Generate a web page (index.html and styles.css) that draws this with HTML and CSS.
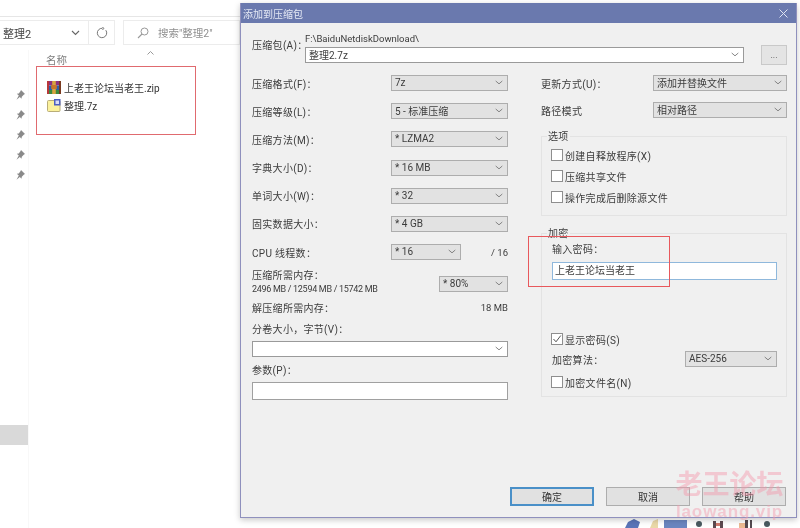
FILE: index.html
```html
<!DOCTYPE html>
<html lang="zh-CN">
<head>
<meta charset="utf-8">
<title>添加到压缩包</title>
<link rel="stylesheet" href="styles.css">
</head>
<body>
<div class="desktop">
  <section class="explorer">
    <div class="toolbar">
      <div class="address">
        <span class="address-text">整理2</span>
        <svg class="address-chevron" width="9" height="6" viewBox="0 0 9 6"><path d="M1 1l3.500 3.500L8 1" fill="none" stroke="#666" stroke-width="1.100"/></svg>
      </div>
      <div class="refresh">
        <svg width="12" height="12" viewBox="0 0 12 12"><path d="M9.800 3.200A4.700 4.700 0 1 1 6.400 1.300M6.200 0l1.800 1.400L6.400 3" fill="none" stroke="#777" stroke-width="1"/></svg>
      </div>
      <div class="search">
        <svg width="12" height="12" viewBox="0 0 12 12"><circle cx="7.500" cy="4.500" r="3.500" fill="none" stroke="#999"/><path d="M5 7l-4 4" stroke="#999" stroke-width="1.100"/></svg>
        <span>搜索"整理2"</span>
      </div>
    </div>
    <div class="content">
      <nav class="quick">
        <svg class="pin" viewBox="0 0 10 10"><path d="M6 0l4 4-1 .6-2.200 2.200-.3 2L4.800 7 1.500 9.800 3.800 5.600 1.800 3.800l2-.4L5.600 1z" fill="#8a8a8a"/></svg>
        <svg class="pin" viewBox="0 0 10 10"><path d="M6 0l4 4-1 .6-2.200 2.200-.3 2L4.800 7 1.500 9.800 3.800 5.600 1.800 3.800l2-.4L5.600 1z" fill="#8a8a8a"/></svg>
        <svg class="pin" viewBox="0 0 10 10"><path d="M6 0l4 4-1 .6-2.200 2.200-.3 2L4.800 7 1.500 9.800 3.800 5.600 1.800 3.800l2-.4L5.600 1z" fill="#8a8a8a"/></svg>
        <svg class="pin" viewBox="0 0 10 10"><path d="M6 0l4 4-1 .6-2.200 2.200-.3 2L4.800 7 1.500 9.800 3.800 5.600 1.800 3.800l2-.4L5.600 1z" fill="#8a8a8a"/></svg>
        <svg class="pin" viewBox="0 0 10 10"><path d="M6 0l4 4-1 .6-2.200 2.200-.3 2L4.800 7 1.500 9.800 3.800 5.600 1.800 3.800l2-.4L5.600 1z" fill="#8a8a8a"/></svg>
        <div class="quick-selected"></div>
      </nav>
      <div class="files">
        <div class="sort-caret"><svg width="7" height="4" viewBox="0 0 7 4"><path d="M.5 3.500l3-3 3 3" fill="none" stroke="#999"/></svg></div>
        <div class="col-name">名称</div>
        <div class="file-row first">
          <svg class="file-icon" viewBox="0 0 14 13">
            <rect x="0" y="0" width="14" height="4.500" fill="#8f2f7f"/>
            <rect x="0" y="4.500" width="14" height="4.500" fill="#2f5fa8"/>
            <rect x="0" y="9" width="14" height="4" fill="#3d8a3f"/>
            <rect x="0" y="0" width="2" height="13" fill="#b8383a"/>
            <rect x="12" y="0" width="2" height="13" fill="#7a3a20"/>
            <rect x="5.200" y="0" width="3.600" height="13" fill="#d9a441"/>
            <rect x="4.200" y="4" width="5.600" height="4" fill="#c9762b"/>
          </svg>
          <span>上老王论坛当老王.zip</span>
        </div>
        <div class="file-row">
          <svg class="file-icon" viewBox="0 0 14 13">
            <rect x=".5" y="1.500" width="12.500" height="11" rx="1" fill="#fbf19c" stroke="#b9ad78"/>
            <rect x="7" y="0" width="6.500" height="6.500" fill="#4d5fc0"/>
            <rect x="8.500" y="1.500" width="3.500" height="3.500" fill="#d8dcf5"/>
          </svg>
          <span>整理.7z</span>
        </div>
      </div>
    </div>
  </section>

  <svg class="wallpaper" width="175" height="10" viewBox="0 0 175 10">
    <path d="M0 10L3 4 9 1 15 4 13 10z" fill="#5a74b8"/>
    <path d="M25 10L28 3 33 1 33 10z" fill="#ead9a8"/>
    <path d="M39 2H62V10H39z" fill="#6a86c0"/>
    <circle cx="74" cy="6" r="3" fill="#4a5a60"/>
    <path d="M88 3h3v7h-3zM95 3h3v7h-3z" fill="#5d4a50"/>
    <path d="M91 5h4v3h-4z" fill="#d07a6e"/>
    <path d="M114 5h6v5h-6z" fill="#ecba92"/>
    <path d="M120 2h3v8h-3zM125 2h2v8h-2z" fill="#554a50"/>
    <circle cx="142" cy="6" r="3" fill="#4a5a60"/>
  </svg>

  <section class="dialog">
    <header class="titlebar">
      <span>添加到压缩包</span>
      <svg width="9" height="9" viewBox="0 0 9 9"><path d="M.5.500l8 8M8.500.500l-8 8" stroke="#dfe4f2" stroke-width="1"/></svg>
    </header>
    <div class="dialog-body">
      <div class="archive">
        <label class="archive-label">压缩包(A)：</label>
        <div class="archive-field">
          <div class="archive-path">F:\BaiduNetdiskDownload\</div>
          <div class="select edit">
            <span>整理2.7z</span>
            <svg class="chev" viewBox="0 0 9 5"><path d="M.8.800L4.500 4 8.200.8" fill="none" stroke="#777"/></svg>
          </div>
        </div>
        <button class="browse">...</button>
      </div>

      <div class="columns">
        <div class="col left">
          <div class="row"><label>压缩格式(F)：</label><div class="select w117"><span>7z</span><svg class="chev" viewBox="0 0 9 5"><path d="M.8.800L4.500 4 8.200.8" fill="none" stroke="#777"/></svg></div></div>
          <div class="row"><label>压缩等级(L)：</label><div class="select w117"><span>5 - 标准压缩</span><svg class="chev" viewBox="0 0 9 5"><path d="M.8.800L4.500 4 8.200.8" fill="none" stroke="#777"/></svg></div></div>
          <div class="row"><label>压缩方法(M)：</label><div class="select w117"><span>* LZMA2</span><svg class="chev" viewBox="0 0 9 5"><path d="M.8.800L4.500 4 8.200.8" fill="none" stroke="#777"/></svg></div></div>
          <div class="row"><label>字典大小(D)：</label><div class="select w117"><span>* 16 MB</span><svg class="chev" viewBox="0 0 9 5"><path d="M.8.800L4.500 4 8.200.8" fill="none" stroke="#777"/></svg></div></div>
          <div class="row"><label>单词大小(W)：</label><div class="select w117"><span>* 32</span><svg class="chev" viewBox="0 0 9 5"><path d="M.8.800L4.500 4 8.200.8" fill="none" stroke="#777"/></svg></div></div>
          <div class="row"><label>固实数据大小：</label><div class="select w117"><span>* 4 GB</span><svg class="chev" viewBox="0 0 9 5"><path d="M.8.800L4.500 4 8.200.8" fill="none" stroke="#777"/></svg></div></div>
          <div class="row"><label>CPU 线程数：</label><div class="cpu"><div class="select w70"><span>* 16</span><svg class="chev" viewBox="0 0 9 5"><path d="M.8.800L4.500 4 8.200.8" fill="none" stroke="#777"/></svg></div><span class="small">/ 16</span></div></div>
          <div class="memory">
            <div class="memory-text">
              <div>压缩所需内存：</div>
              <div class="small usage">2496 MB / 12594 MB / 15742 MB</div>
            </div>
            <div class="select w69"><span>* 80%</span><svg class="chev" viewBox="0 0 9 5"><path d="M.8.800L4.500 4 8.200.8" fill="none" stroke="#777"/></svg></div>
          </div>
          <div class="decomp"><label>解压缩所需内存：</label><span class="small">18 MB</span></div>
          <label class="field-label volume">分卷大小，字节(V)：</label>
          <div class="select edit"><span></span><svg class="chev" viewBox="0 0 9 5"><path d="M.8.800L4.500 4 8.200.8" fill="none" stroke="#777"/></svg></div>
          <label class="field-label params">参数(P)：</label>
          <div class="text-input"></div>
        </div>

        <div class="col right">
          <div class="row r1"><label>更新方式(U)：</label><div class="select w134"><span>添加并替换文件</span><svg class="chev" viewBox="0 0 9 5"><path d="M.8.800L4.500 4 8.200.8" fill="none" stroke="#777"/></svg></div></div>
          <div class="row"><label>路径模式</label><div class="select w134"><span>相对路径</span><svg class="chev" viewBox="0 0 9 5"><path d="M.8.800L4.500 4 8.200.8" fill="none" stroke="#777"/></svg></div></div>
          <div class="group options">
            <div class="legend">选项</div>
            <div class="check"><i class="box"></i><span>创建自释放程序(X)</span></div>
            <div class="check"><i class="box"></i><span>压缩共享文件</span></div>
            <div class="check"><i class="box"></i><span>操作完成后删除源文件</span></div>
          </div>
          <div class="group crypt">
            <div class="legend">加密</div>
            <label class="pw-label">输入密码：</label>
            <div class="pw-input">上老王论坛当老王</div>
            <div class="check show"><i class="box"><svg width="10" height="10" viewBox="0 0 10 10"><path d="M1.500 5l2.500 2.800L8.800 1.500" fill="none" stroke="#555" stroke-width="1"/></svg></i><span>显示密码(S)</span></div>
            <div class="algo"><label>加密算法：</label><div class="select w92"><span>AES-256</span><svg class="chev" viewBox="0 0 9 5"><path d="M.8.800L4.500 4 8.200.8" fill="none" stroke="#777"/></svg></div></div>
            <div class="check"><i class="box"></i><span>加密文件名(N)</span></div>
          </div>
        </div>
      </div>

      <footer class="buttons">
        <button class="btn primary">确定</button>
        <button class="btn">取消</button>
        <button class="btn">帮助</button>
      </footer>
    </div>
  </section>

  <div class="mark mark-files"></div>
  <div class="mark mark-pass"></div>
  <div class="watermark">
    <div class="wm-cn">老王论坛</div>
    <div class="wm-en">laowang.vip</div>
  </div>
</div>
</body>
</html>
```

FILE: styles.css
```css
* { box-sizing: border-box; }
html, body { margin: 0; padding: 0; background: #fff; }
body {
  font-family: Roboto, "Noto Sans CJK SC", sans-serif;
  font-size: 10px;
  color: #3c3c3c;
}
.desktop {
  position: relative;
  width: 800px;
  height: 528px;
  overflow: hidden;
  background: #fff;
  filter: blur(.35px);
}

/* Explorer behind the dialog */
.explorer { position: absolute; left: 0; top: 0; width: 240px; height: 528px; }
.toolbar {
  display: flex;
  height: 34px;
  margin-top: 16px;
  padding-top: 3px;
  border-top: 1px solid #e6e6e6;
  gap: 8px;
}
.toolbar > div { height: 25px; border: 1px solid #ececec; border-left: 0; display: flex; align-items: center; }
.address { width: 89px; padding-left: 3px; justify-content: space-between; font-size: 11px; color: #444; }
.address-chevron { margin-right: 8px; }
.refresh { width: 26px; margin-left: -8px; justify-content: center; }
.search { flex: 1; border-left: 1px solid #ececec !important; padding-left: 13px; gap: 9px; color: #8f8f8f; font-size: 10.500px; }
.content { display: flex; }
.quick { width: 29px; height: 478px; border-right: 1px solid #f8f8f8; padding-top: 40px; position: relative; display: flex; flex-direction: column; align-items: flex-end; gap: 10px; padding-right: 3px; }
.pin { width: 10px; height: 10px; display: block; }
.quick-selected { position: absolute; left: 0; top: 375px; width: 28px; height: 20px; background: #d9d9d9; }
.files { flex: 1; position: relative; padding-left: 17px; }
.sort-caret { position: absolute; left: 118px; top: 0; line-height: 4px; }
.col-name { color: #7d7d7d; font-size: 10.500px; line-height: 14px; margin-top: 4px; }
.file-row { display: flex; align-items: center; gap: 3px; height: 18px; font-size: 10px; color: #333; margin-left: 1px; }
.file-row.first { margin-top: 10px; }
.file-icon { width: 14px; height: 13px; flex: none; }

/* Wallpaper strip */
.wallpaper { position: absolute; left: 625px; top: 518px; display: block; }

/* Dialog */
.dialog {
  position: absolute;
  left: 240px;
  top: 3px;
  width: 557px;
  height: 515px;
  background: #f0f0f0;
  border: 1px solid #8f90bd;
  border-top: 0;
  box-shadow: 0 2px 6px rgba(0,0,0,.22);
  display: flex;
  flex-direction: column;
}
.titlebar {
  height: 20px;
  background: #6a79ae;
  color: #e4e8f4;
  font-size: 10px;
  display: flex;
  align-items: center;
  justify-content: space-between;
  padding: 0 8px 0 2px;
  flex: none;
}
.dialog-body { flex: 1; display: flex; flex-direction: column; padding: 10px 9px 11px 11px; min-height: 0; }
label { display: block; white-space: nowrap; letter-spacing: .3px; }
.archive { display: flex; height: 32px; margin-bottom: 10px; }
.archive-label { width: 53px; line-height: 14px; margin-top: 6px; }
.archive-field { width: 439px; }
.archive-path { height: 14px; line-height: 12px; font-size: 9.500px; }
.browse {
  width: 26px; height: 20px; margin: 12px 0 0 17px;
  background: #e4e4e4; border: 1px solid #c9c9c9; padding: 0;
  font: 9px Roboto, sans-serif; color: #555;
}

.columns { display: flex; gap: 33px; }
.col { display: flex; flex-direction: column; }
.col.left { width: 256px; }
.col.right { width: 246px; }
.row { display: flex; justify-content: space-between; align-items: center; height: 16px; margin-bottom: 12.200px; flex: none; }
.right .row { margin-bottom: 11px; }

.select {
  height: 16px;
  background: #e2e2e2;
  border: 1px solid #adadad;
  padding: 0 3px 1px;
  display: flex;
  align-items: center;
  justify-content: space-between;
  flex: none;
  font-size: 10px;
  white-space: nowrap;
}
.select.edit { background: #fff; border-color: #9a9a9a; width: 100%; }
.w117 { width: 117px; }
.w70 { width: 70px; }
.w69 { width: 69px; }
.w134 { width: 134px; }
.w92 { width: 92px; }
.chev { width: 8px; height: 5px; flex: none; margin-right: 1px; }
.small { font-size: 9.500px; }
.small.usage { font-size: 9px; letter-spacing: -.3px; }
.cpu { width: 117px; display: flex; justify-content: space-between; align-items: center; }
.memory { display: flex; justify-content: space-between; margin-top: -3.500px; height: 28px; }
.memory-text div:first-child { line-height: 14px; letter-spacing: .3px; }
.memory-text .small { line-height: 13px; }
.memory .select { margin-top: 7px; }
.decomp { display: flex; justify-content: space-between; align-items: center; height: 14px; margin-top: 3.500px; }
.field-label { line-height: 14px; }
.volume { margin: 9px 0 4px; }
.params { margin: 7px 0 4px; }
.text-input { height: 18px; background: #fff; border: 1px solid #a0a0a0; }

.group { border: 1px solid #e3e3e3; padding: 0 9px; flex: none; }
.legend { width: fit-content; margin: -7px 0 0 -4px; padding: 0 1px; background: #f0f0f0; line-height: 14px; letter-spacing: .3px; }
.check { display: flex; align-items: center; gap: 2px; height: 14px; white-space: nowrap; letter-spacing: .3px; }
.options { height: 80px; margin-top: 7px; }
.options .check { margin-top: 7px; }
.options .legend + .check { margin-top: 4px; }
.box { width: 12px; height: 12px; background: #fff; border: 1px solid #8e8e8e; flex: none; display: flex; align-items: center; justify-content: center; }
.box svg { display: block; }
.crypt { height: 164px; margin-top: 17px; }
.pw-label { margin: 2px 0 0 1px; line-height: 14px; }
.pw-input { height: 18px; margin: 5px 0 0 1px; background: #fff; border: 1px solid #8fb8dc; line-height: 16px; padding-left: 2px; font-size: 10px; width: 225px; }
.show { margin-top: 52px; }
.algo { display: flex; justify-content: space-between; align-items: center; height: 16px; margin: 5px 0 8px 1px; width: 225px; }

.buttons { margin: auto 1px 0 0; display: flex; justify-content: flex-end; gap: 12px; }
.btn {
  width: 84px; height: 19px; background: #e1e1e1; border: 1px solid #adadad; padding: 0;
  font: 10px Roboto, "Noto Sans CJK SC", sans-serif; color: #333;
}
.btn.primary { border: 2px solid #4a90c8; }

/* Overlays */
.mark { position: absolute; border: 1px solid #e06a6f; }
.mark-files { left: 36px; top: 66px; width: 160px; height: 69px; }
.mark-pass { left: 528px; top: 236px; width: 142px; height: 51px; border-color: #e8585c; }
.watermark { position: absolute; left: 672px; top: 468px; width: 115px; text-align: center; color: rgba(244,150,170,.45); pointer-events: none; }
.wm-cn { font: 700 27px/30px "Noto Sans CJK SC", sans-serif; white-space: nowrap; }
.wm-en { font: 700 17px/19px "Liberation Sans", sans-serif; margin-top: 4px; letter-spacing: .9px; white-space: nowrap; }
```
